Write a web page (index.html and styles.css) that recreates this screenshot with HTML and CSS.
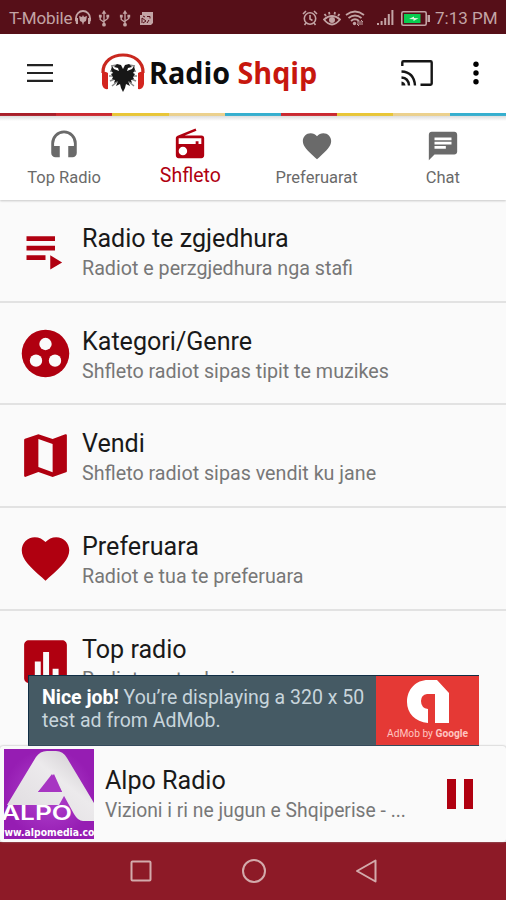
FILE: index.html
```
<!DOCTYPE html>
<html lang="sq">
<head>
    <meta charset="UTF-8">
    <meta name="viewport" content="width=device-width, initial-scale=1.0">
    <title>Radio Shqip</title>
    <link rel="stylesheet" href="styles.css">
</head>
<body>
    <div class="status-bar">
        <div class="status-left">
            <span class="carrier">T-Mobile</span>
            <svg class="status-radio" viewBox="0 0 18 16"><path d="M2 11V8a7 7 0 0 1 14 0v3" fill="none" stroke="currentColor" stroke-width="1.8"/><path d="M1 8h3v6H2zM14 8h3l-1 6h-2zM5 6l3 1 1-2 1 2 3-1-1 5-2 1-1 3-1-3-2-1z" fill="currentColor"/></svg>
            <svg class="status-usb" viewBox="0 0 12 18"><path d="M6 3v12M2 6v4l4 3M10 6v3l-4 3" fill="none" stroke="currentColor" stroke-width="1.4"/><path d="M6 0l2.5 4h-5z" fill="currentColor"/><circle cx="6" cy="15.5" r="2" fill="currentColor"/><path d="M.6 5h3v3h-3zM8.5 5h3v3h-3z" fill="currentColor"/></svg>
            <svg class="status-usb" viewBox="0 0 12 18"><path d="M6 3v12M2 6v4l4 3M10 6v3l-4 3" fill="none" stroke="currentColor" stroke-width="1.4"/><path d="M6 0l2.5 4h-5z" fill="currentColor"/><circle cx="6" cy="15.5" r="2" fill="currentColor"/><path d="M.6 5h3v3h-3zM8.5 5h3v3h-3z" fill="currentColor"/></svg>
            <svg class="status-image" viewBox="0 0 15 15"><path d="M3 1h11v11l-2 2H1V4h2z" fill="currentColor"/><path d="M3 12V7l4 3-3 2M8 12l2-3M4 5l2 1M8 5.5h3v2" fill="none" stroke="#560f18" stroke-width="1"/></svg>
        </div>
        <div class="status-right">
            <svg class="status-alarm" viewBox="0 0 16 16"><g fill="none" stroke="currentColor" stroke-width="1.6"><circle cx="8" cy="8.5" r="5.7"/><path d="M8 5v4l2.5 1.5M1 4l3-3M15 4l-3-3M4 13l-1.5 2M12 13l1.500 2"/></g></svg>
            <svg class="status-eye" viewBox="0 0 18 15"><g fill="none" stroke="currentColor" stroke-width="1.8"><path d="M1 8.500q8-7 16 0-8 10-16 0zM3 5L1.500 3M6.500 3.500L6 1M11.500 3.500L12 1M15 5l1.500-2"/></g><circle cx="9" cy="9" r="3" fill="currentColor"/></svg>
            <svg class="status-wifi" viewBox="0 0 20 16"><g fill="none" stroke="currentColor" stroke-width="1.8"><path d="M1 5q9-7 18 0M3.500 8q6.500-5 13 0M6 11q4-3.500 8 0"/></g><circle cx="9.500" cy="13.500" r="1.700" fill="currentColor"/><path d="M12 12h6l-2-2M18 14h-6l2 2" fill="none" stroke="currentColor"/></svg>
            <svg class="status-signal" viewBox="0 0 17 16"><path d="M0 13h2v2H0zM3.600 11h2v4h-2zM7.200 8h2v7h-2zM10.800 4h2v11h-2zM14.400 0h2v15h-2z" fill="currentColor"/></svg>
            <svg class="status-battery" viewBox="0 0 29 15"><rect x=".8" y=".8" width="24.4" height="13.4" rx="1.5" fill="none" stroke="currentColor" stroke-width="1.6"/><path d="M26.500 4H29v7h-2.500z" fill="currentColor"/><path d="M3 3h16.500v9H3z" fill="#09ce50"/><path d="M8 8l5-2.500v1.500l4.500.3-5 2.700v-1.700z" fill="#dff8df"/></svg>
            <span class="clock">7:13 PM</span>
        </div>
    </div>

    <header class="app-bar">
        <svg class="menu-icon" viewBox="0 0 26 18"><path d="M0 1.200h26M0 9h26M0 16.800h26" stroke="#222" stroke-width="2.200"/></svg>
        <div class="brand">
            <svg class="brand-logo" viewBox="0 0 44 40">
                <path d="M2 20C1-4 43-4 42 20" fill="none" stroke="#c9281f" stroke-width="3.200"/>
                <path d="M1 19q3-1 6 1v16q-5 1-6-5zM43 19q-3-1-6 1v16q5 1 6-5z" fill="#d3251f"/>
                <path d="M10 13l6-1M9 18l7 1M8 23h8M9 28l7-3M11 33l6-5M34 13l-6-1M35 18l-7 1M36 23h-8M35 28l-7-3M33 33l-6-5" stroke="#888" stroke-width="1.500"/>
                <path d="M22 16l-2-4-4-1-3 3 4 1 1 3-5-2-2-3-1 4 2 3-2 1 2 3-1 2 3 1-1 3 4-2-2 5 4-2 1 4 2 4 2-4 1-4 4 2-2-5 4 2-1-3 3-1-1-2 2-3-2-1 2-3-1-4-2 3-5 2 1-3 4-1-3-3-4 1z" fill="#171717"/>
            </svg>
            <h1 class="brand-name">Radio <span>Shqip</span></h1>
        </div>
        <svg class="cast-icon" viewBox="0 0 32 26"><g fill="none" stroke="#151515" stroke-width="2.400"><path d="M1.300 6V2.500q0-1.200 1.200-1.200h27q1.200 0 1.200 1.200v21q0 1.200-1.200 1.200H19.500"/><path d="M.5 17.500q7 .5 7.500 8M.5 11.500Q13 12 14 25.500"/></g><path d="M.5 21.500q3.500.5 4 4h-4z" fill="#151515"/></svg>
        <svg class="more-icon" viewBox="0 0 6 24"><circle cx="3" cy="3.300" r="2.700"/><circle cx="3" cy="12" r="2.700"/><circle cx="3" cy="20.700" r="2.700"/></svg>
    </header>

    <div class="stripes">
        <i class="dark-red"></i><i class="red"></i><i class="yellow"></i><i class="sand"></i><i class="blue"></i><i class="red"></i><i class="yellow"></i><i class="sand"></i><i class="blue"></i>
    </div>

    <nav class="tabs">
        <a class="tab">
            <svg viewBox="0 0 24 24"><path d="M12 1a9 9 0 0 0-9 9v7a3 3 0 0 0 3 3h3v-8H5v-2a7 7 0 0 1 14 0v2h-4v8h3a3 3 0 0 0 3-3v-7a9 9 0 0 0-9-9z"/></svg>
            <span>Top Radio</span>
        </a>
        <a class="tab active">
            <svg viewBox="0 0 24 24"><path d="M3.240 6.150C2.510 6.430 2 7.170 2 8v12a2 2 0 0 0 2 2h16a2 2 0 0 0 2-2V8a2 2 0 0 0-2-2H8.300l8.260-3.340L15.880 1zM7 20a3 3 0 1 1 0-6 3 3 0 0 1 0 6zm13-8h-2v-2h-2v2H4V8h16z"/></svg>
            <span>Shfleto</span>
        </a>
        <a class="tab">
            <svg viewBox="0 0 24 24"><path d="M12 21.350l-1.450-1.320C5.400 15.360 2 12.280 2 8.500 2 5.420 4.420 3 7.500 3c1.740 0 3.410.81 4.500 2.090C13.090 3.810 14.760 3 16.500 3 19.580 3 22 5.420 22 8.500c0 3.780-3.400 6.860-8.550 11.540z"/></svg>
            <span>Preferuarat</span>
        </a>
        <a class="tab">
            <svg viewBox="0 0 24 24"><path d="M20 2H4c-1.100 0-1.990.9-1.990 2L2 22l4-4h14c1.100 0 2-.9 2-2V4c0-1.100-.9-2-2-2zM6 9h12v2H6zm8 5H6v-2h8zm4-6H6V6h12z"/></svg>
            <span>Chat</span>
        </a>
    </nav>

    <main class="list">
        <section class="row">
            <svg class="row-icon" viewBox="0 0 24 24"><path d="M4 6h12v2H4zM4 10h12v2H4zM4 14h8v2H4zM14 14v6l5-3z"/></svg>
            <div>
                <h2>Radio te zgjedhura</h2>
                <p>Radiot e perzgjedhura nga stafi</p>
            </div>
        </section>
        <section class="row">
            <svg class="row-icon" viewBox="0 0 24 24"><circle cx="12" cy="12" r="10"/><g fill="#fafafa"><circle cx="12" cy="8" r="2.600"/><circle cx="8" cy="15" r="2.600"/><circle cx="16" cy="15" r="2.600"/></g></svg>
            <div>
                <h2>Kategori/Genre</h2>
                <p>Shfleto radiot sipas tipit te muzikes</p>
            </div>
        </section>
        <section class="row">
            <svg class="row-icon" viewBox="0 0 24 24"><path d="M20.500 3l-.16.03L15 5.100 9 3 3.360 4.900c-.21.07-.36.25-.36.48V20.500c0 .28.22.5.5.5l.16-.03L9 18.900l6 2.100 5.640-1.900c.21-.07.36-.25.36-.48V3.500c0-.28-.22-.5-.5-.5zM15 19l-6-2.110V5l6 2.110z"/></svg>
            <div>
                <h2>Vendi</h2>
                <p>Shfleto radiot sipas vendit ku jane</p>
            </div>
        </section>
        <section class="row">
            <svg class="row-icon" viewBox="0 0 24 24"><path d="M12 21.350l-1.450-1.320C5.400 15.360 2 12.280 2 8.500 2 5.420 4.420 3 7.500 3c1.740 0 3.410.81 4.500 2.090C13.090 3.810 14.760 3 16.500 3 19.580 3 22 5.420 22 8.500c0 3.780-3.400 6.860-8.550 11.540z"/></svg>
            <div>
                <h2>Preferuara</h2>
                <p>Radiot e tua te preferuara</p>
            </div>
        </section>
        <section class="row">
            <svg class="row-icon" viewBox="0 0 24 24"><path d="M19 3H5c-1.100 0-2 .9-2 2v14c0 1.100.9 2 2 2h14c1.100 0 2-.9 2-2V5c0-1.100-.9-2-2-2zM10 19H7.500v-7H10zm3.500 0H11V8h2.500zm4 0H15v-4h2.500z"/></svg>
            <div>
                <h2>Top radio</h2>
                <p>Radiot me te degjuara</p>
            </div>
        </section>
    </main>

    <!-- ad banner over the end of the list -->
    <aside class="ad">
        <p class="ad-text"><b>Nice job!</b> You’re displaying a 320 x 50<br>test ad from AdMob.</p>
        <div class="ad-brand">
            <svg viewBox="0 0 42 43"><path d="M21 43C8 42 0 33 0 22 0 9 9 0 21 0h9l12 13v30H28V14h-8q-6 1-6 7 0 7 7 8z" fill="#fff"/></svg>
            <span>AdMob by <b>Google</b></span>
        </div>
    </aside>

    <section class="player">
        <svg class="cover" viewBox="0 0 90 90">
            <defs>
                <radialGradient id="purple"><stop offset="0" stop-color="#b345cf"/><stop offset="1" stop-color="#961db3"/></radialGradient>
                <linearGradient id="silver" x1="1" x2="0" y2="1"><stop offset="0" stop-color="#c9c5c9"/><stop offset=".4" stop-color="#eceaec"/><stop offset="1" stop-color="#dedade"/></linearGradient>
            </defs>
            <path d="M0 0h90v90H0z" fill="url(#purple)"/>
            <path d="M3 56L32 8q4-6 11-6h9q7 0 11 7l27 45v18H79q-5 0-9-7L59 45l-9-20-16 18h24q3 0 2 4l-5 9z" fill="url(#silver)"/>
            <path d="M48 25L34 43h24z" fill="#a735c2"/>
            <text class="cover-name" x="-3" y="71" textLength="71" lengthAdjust="spacingAndGlyphs">ALPO</text>
            <text class="cover-url" x="-8" y="87" textLength="108" lengthAdjust="spacingAndGlyphs">www.alpomedia.com</text>
        </svg>
        <div class="player-info">
            <h2>Alpo Radio</h2>
            <p>Vizioni i ri ne jugun e Shqiperise - ...</p>
        </div>
        <svg class="pause" viewBox="0 0 26 30"><path d="M0 0h9v30H0zM17 0h9v30h-9z" fill="#b00010"/></svg>
    </section>

    <footer class="nav-bar">
        <svg viewBox="0 0 24 24"><rect x="2.500" y="2.500" width="19" height="19" rx="1"/></svg>
        <svg viewBox="0 0 24 24"><circle cx="12" cy="12" r="11"/></svg>
        <svg viewBox="0 0 24 24"><path d="M20.500 1.500v21L2 12z" stroke-linejoin="round"/></svg>
    </footer>
</body>
</html>
```
FILE: styles.css
```
:root{
    --red: #b00010;
    --grey: #6a6a6a;
    --background: #fafafa;
    --status: #560f18;
    --status-icon: #c3a4a5;
}
*,*::before,*::after{
    box-sizing: border-box;
    margin: 0;
    padding: 0;
}
body{
    display: flex;
    flex-direction: column;
    position: relative;
    width: 506px;
    height: 900px;
    overflow: hidden;
    font-family: Roboto, sans-serif;
    background-color: var(--background);
}
svg{
    display: block;
    flex: none;
}
h1, h2, p, span{
    white-space: nowrap;
}
.status-bar{
    display: flex;
    justify-content: space-between;
    flex: none;
    height: 34px;
    padding: 2px 10px 0 9px;
    background-color: var(--status);
    color: var(--status-icon);
    font-size: 17px;
}
.status-left, .status-right{
    display: flex;
    align-items: center;
}
.carrier{
    width: 65px;
    letter-spacing: -0.1px;
}
.status-radio{
    width: 18px;
    height: 16px;
}
.status-usb{
    width: 12px;
    height: 17px;
    margin-left: 6px;
}
.status-usb + .status-usb{
    margin-left: 9px;
}
.status-image{
    width: 15px;
    height: 15px;
    margin-left: 8px;
}
.status-alarm{
    width: 16px;
    height: 16px;
}
.status-eye{
    width: 18px;
    height: 15px;
    margin-left: 5px;
}
.status-wifi{
    width: 20px;
    height: 16px;
    margin-left: 4px;
}
.status-signal{
    width: 17px;
    height: 16px;
    margin-left: 12px;
}
.status-battery{
    width: 29px;
    height: 15px;
    margin-left: 7px;
}
.clock{
    width: 61px;
    margin-left: 5px;
}
.app-bar{
    display: flex;
    align-items: center;
    flex: none;
    height: 79px;
    padding: 0 27px 1px;
    background-color: #fff;
}
.menu-icon{
    width: 26px;
    height: 18px;
}
.brand{
    display: flex;
    align-items: center;
    width: 348px;
    padding-left: 48px;
}
.brand-logo{
    width: 44px;
    height: 40px;
}
.brand-name{
    margin-left: 4px;
    font-family: "Open Sans", sans-serif;
    font-size: 30px;
    font-weight: 700;
    line-height: 40px;
    color: #0d0d0d;
    transform: scaleX(0.957);
    transform-origin: left;
}
.brand-name span{
    color: #c7170e;
}
.cast-icon{
    width: 32px;
    height: 26px;
}
.more-icon{
    width: 6px;
    height: 24px;
    margin-left: 40px;
}
.stripes{
    display: grid;
    grid-template-columns: repeat(9, 56.2px);
    flex: none;
    height: 3px;
    overflow: hidden;
}
.dark-red{
    background-color: #a91e29;
}
.red{
    background-color: #cb2830;
}
.yellow{
    background-color: #e9c636;
}
.sand{
    background-color: #ecd18d;
}
.blue{
    background-color: #35afcf;
}
.tabs{
    display: grid;
    grid-template-columns: repeat(4, 1fr);
    flex: none;
    height: 84px;
    padding-left: 1px;
    background: linear-gradient(#dedede, #fff 5px);
    box-shadow: 0 1px 2px #c8c8c8;
}
.tab{
    display: flex;
    flex-direction: column;
    align-items: center;
    padding-top: 13px;
    color: var(--grey);
    font-size: 16.5px;
    line-height: 20px;
}
.tab svg{
    width: 34px;
    height: 34px;
    margin-bottom: 5px;
    fill: currentColor;
}
.tab.active{
    padding-top: 11px;
    color: var(--red);
    font-size: 19.5px;
}
.list{
    flex: none;
    height: 543px;
    overflow: hidden;
}
.row{
    display: flex;
    height: 102.7px;
    padding: 22px 17px 0;
    border-bottom: 2px solid #e2e2e2;
}
.row:last-child{
    border-bottom: 0;
}
.row-icon{
    width: 57px;
    height: 57px;
    fill: var(--red);
}
.row div{
    padding: 1px 0 0 8px;
}
.row h2, .player h2{
    font-size: 25.1px;
    font-weight: 400;
    line-height: 32px;
    color: #191919;
}
.row p, .player p{
    font-size: 19.7px;
    line-height: 28px;
    color: #777;
}
.ad{
    display: flex;
    position: absolute;
    left: 28px;
    top: 675px;
    width: 451px;
    height: 71px;
    background-color: #455a64;
    border: 1px solid #102e45;
    border-right: 0;
}
.ad-text{
    width: 347px;
    padding: 10px 0 0 13px;
    font-size: 19.5px;
    line-height: 23px;
    color: #c8d5dc;
}
.ad-text b{
    color: #fff;
}
.ad-brand{
    display: flex;
    flex-direction: column;
    align-items: center;
    width: 103px;
    padding-top: 4px;
    background-color: #e53935;
    color: #ffc5c0;
    font-size: 10.2px;
    line-height: 22px;
}
.ad-brand svg{
    width: 42px;
    height: 43px;
}
.player{
    display: flex;
    position: relative;
    align-items: center;
    flex: none;
    height: 96px;
    margin-top: auto;
    padding: 0 33px 1px 4px;
    background-color: #fafafa;
    border-radius: 3px;
    box-shadow: 0 0 2px #999;
}
.cover{
    width: 90px;
    height: 90px;
    overflow: hidden;
}
.cover-name{
    font-family: Inter, sans-serif;
    font-size: 20px;
    font-weight: 600;
    fill: #fff;
}
.cover-url{
    font-family: "DejaVu Sans", sans-serif;
    font-size: 10.5px;
    font-weight: 700;
    fill: #fff;
}
.player-info{
    flex: 1;
    padding: 2px 0 0 11px;
}
.player p{
    font-size: 19.3px;
}
.pause{
    width: 26px;
    height: 30px;
}
.nav-bar{
    display: flex;
    justify-content: center;
    gap: 89px;
    flex: none;
    height: 58px;
    padding: 17px 0 0 2px;
    background-color: #8d1a27;
}
.nav-bar svg{
    width: 24px;
    height: 24px;
    fill: none;
    stroke: #d3aaab;
    stroke-width: 2;
}
```
